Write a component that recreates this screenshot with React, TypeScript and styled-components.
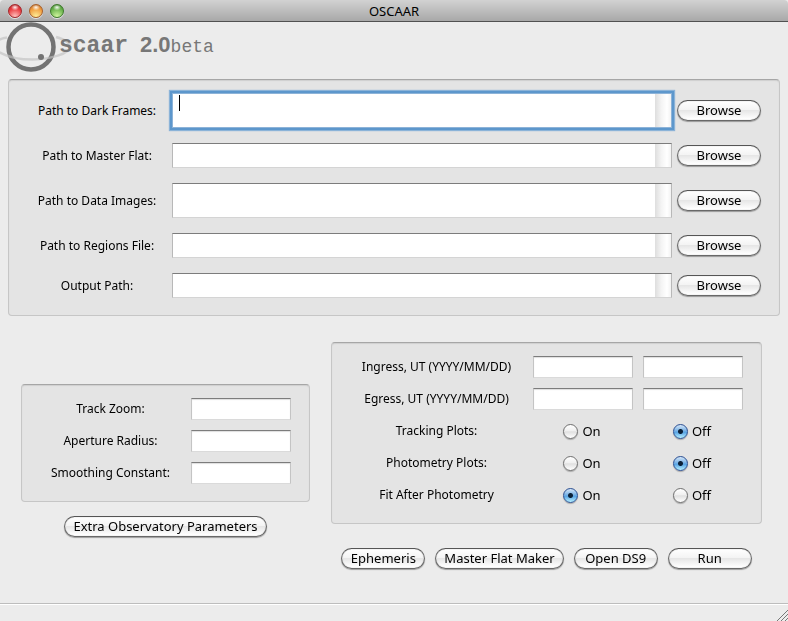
import React, { useState } from "react";
import styled, { createGlobalStyle } from "styled-components";

const GlobalStyle = createGlobalStyle`
  *, *::before, *::after { box-sizing: border-box; }
  body { margin: 0; background: #ececec; }
  body, button, input, textarea { font-family: "Noto Sans", "Open Sans", sans-serif; font-size: 12px; line-height: 16px; color: #000; }
`;

const Window = styled.div`
  display: flex;
  flex-direction: column;
  min-height: 100vh;
  overflow-x: hidden;
  background: #ececec;
`;

const TitleBar = styled.header`
  display: grid;
  grid-template-columns: 1fr auto 1fr;
  align-items: center;
  height: 22px;
  padding: 0 8px;
  border-bottom: 1px solid #515151;
  border-radius: 4px 4px 0 0;
  background: linear-gradient(#d2d2d2, #a8a8a8);
`;

const Title = styled.h1`
  margin: 0;
  font-size: 13px;
  font-weight: 400;
  line-height: 20px;
`;

const Lights = styled.div`
  display: flex;
  gap: 7px;
`;

const Light = styled.button<{ $dark: string; $mid: string; $glow: string }>`
  width: 14px;
  height: 14px;
  padding: 0;
  border: 1px solid ${(p) => p.$dark};
  border-radius: 50%;
  background:
    radial-gradient(ellipse 4px 3px at 50% 20%, #fffe, #fff0),
    radial-gradient(circle at 50% 95%, ${(p) => p.$glow}, ${(p) => p.$mid} 65%, ${(p) => p.$dark});
  box-shadow: 0 1px 0 #e2e2e2;
`;

const Brand = styled.div`
  display: flex;
  height: 57px;
`;

const Logo = styled.svg`
  flex: none;
  width: 59px;
  height: 52px;
  overflow: visible;
`;

const Wordmark = styled.p`
  display: flex;
  align-items: baseline;
  margin: 0;
  color: #777;
  font-family: "Liberation Mono", monospace;
  font-size: 23px;
  font-weight: 700;
  line-height: 46px;
`;

const Version = styled.span`
  margin-left: 12px;
  font-family: "Liberation Sans", sans-serif;
  font-size: 22px;
`;

const Stage = styled.span`
  font-size: 18px;
  font-weight: 400;
`;

const Panel = styled.section`
  border: 1px solid #c6c6c6;
  border-top-color: #a6a6a6;
  border-radius: 4px;
  background: #e4e4e4;
  box-shadow: inset 0 1px 1px #cfcfcf;
`;

const PathPanel = styled(Panel)`
  display: flex;
  flex-direction: column;
  gap: 15px;
  margin: 0 8px;
  padding: 13px 18px 17px 27px;
`;

const PathRow = styled.div`
  display: grid;
  grid-template-columns: 122px 1fr 84px;
  align-items: center;
`;

const Label = styled.label`
  text-align: center;
  white-space: nowrap;
`;

const PathFrame = styled.div<{ $tall?: boolean }>`
  display: flex;
  height: ${(p) => (p.$tall ? 35 : 25)}px;
  margin: 0 5px 0 14px;
  border: 1px solid #b8b8b8;
  border-top-color: #7c7c7c;
  border-bottom-color: #d4d4d4;
  background: #fff;

  &::after {
    content: "";
    width: 16px;
    background: linear-gradient(90deg, #dedede, #f4f4f4 40%, #fff 75%, #f2f2f2);
  }

  &:focus-within {
    border-color: #8db3d8;
    box-shadow: 0 0 0 2px #5d97cc, 0 0 1px 3px #8bb3d8;
  }
`;

const PathInput = styled.textarea`
  flex: 1;
  min-width: 0;
  height: 100%;
  padding: 1px 6px;
  border: 0;
  background: transparent;
  resize: none;
  outline: none;
  overflow: hidden;

  &:focus:placeholder-shown {
    caret-color: transparent;
    background: linear-gradient(#000, #000) 6px 1px / 1px 16px no-repeat;
  }
`;

const PushButton = styled.button`
  min-width: 84px;
  height: 21px;
  padding: 0 8px 1px;
  border: 1px solid #686868;
  border-top-color: #555;
  border-radius: 11px;
  background: linear-gradient(#fff, #f4f4f4 45%, #e6e6e6 50%, #fff 95%);
  box-shadow: 0 1px 1px #0005, inset 0 0 1px #999;
  font-size: 13px;
  line-height: 18px;
  white-space: nowrap;
`;

const Settings = styled.main`
  display: grid;
  grid-template-columns: 289fr 431fr;
  gap: 21px;
  margin: 26px 26px 24px 21px;
`;

const Column = styled.div<{ $drop?: boolean; $gap: number }>`
  display: flex;
  flex-direction: column;
  align-items: center;
  gap: ${(p) => p.$gap}px;
  padding-top: ${(p) => (p.$drop ? 42 : 0)}px;

  > section { width: 100%; }
`;

const TuningPanel = styled(Panel)`
  display: grid;
  grid-template-columns: 1fr 100px;
  align-items: center;
  gap: 10px 18px;
  padding: 13px 18px 17px 26px;
`;

const TimingPanel = styled(Panel)`
  display: grid;
  grid-template-columns: 1fr 100px 100px;
  align-items: center;
  gap: 10px;
  padding: 13px 18px 17px;
`;

const TextField = styled.input`
  display: block;
  width: 100%;
  min-width: 0;
  height: 22px;
  padding: 0 4px;
  border: 1px solid #c4c4c4;
  border-top-color: #7c7c7c;
  border-bottom-color: #dadada;
  border-radius: 0;
  background: #fff;
  box-shadow: inset 0 1px 1px #dedede;
  outline: none;
`;

const SwitchName = styled.span`
  text-align: center;
`;

const Choice = styled.label`
  display: flex;
  align-items: center;
  justify-content: center;
  gap: 4px;
  height: 22px;
  padding-right: 2px;
  font-size: 13px;
`;

const Radio = styled.input`
  appearance: none;
  width: 15px;
  height: 15px;
  margin: 0;
  border: 1px solid #6f6f6f;
  border-radius: 50%;
  background: linear-gradient(#fff, #f0f0f0 45%, #e0e0e0 52%, #fff);
  box-shadow: 0 1px 1px #0004;

  &:checked {
    border-color: #2b4f92;
    background:
      radial-gradient(circle at 50% 50%, #0b2138 2px, #0b213800 3px),
      linear-gradient(#d5e6f8, #78b2e6 45%, #57a3e4 55%, #b6f0ff);
  }
`;

const Actions = styled.div`
  display: flex;
  gap: 10px;
`;

const StatusBar = styled.footer`
  display: flex;
  justify-content: flex-end;
  align-items: flex-end;
  height: 18px;
  margin-top: auto;
  border-top: 1px solid #bdbdbd;
  box-shadow: inset 0 1px 0 #fff;
`;

const Grip = styled.svg`
  width: 12px;
  height: 12px;
`;

const paths = [
  { id: "dark", label: "Path to Dark Frames:", tall: true },
  { id: "flat", label: "Path to Master Flat:", tall: false },
  { id: "data", label: "Path to Data Images:", tall: true },
  { id: "regions", label: "Path to Regions File:", tall: false },
  { id: "output", label: "Output Path:", tall: false },
];

const tuning = [
  { id: "zoom", label: "Track Zoom:" },
  { id: "radius", label: "Aperture Radius:" },
  { id: "smoothing", label: "Smoothing Constant:" },
];

const times = [
  { id: "ingress", label: "Ingress, UT (YYYY/MM/DD)" },
  { id: "egress", label: "Egress, UT (YYYY/MM/DD)" },
];

const switches = [
  { id: "tracking", label: "Tracking Plots:", on: false },
  { id: "photometry", label: "Photometry Plots:", on: false },
  { id: "fit", label: "Fit After Photometry", on: true },
];

function OnOff({ id, label, on }: { id: string; label: string; on: boolean }) {
  const [value, setValue] = useState(on);
  return (
    <>
      <SwitchName>{label}</SwitchName>
      <Choice>
        <Radio type="radio" name={id} checked={value} onChange={() => setValue(true)} />
        On
      </Choice>
      <Choice>
        <Radio type="radio" name={id} checked={!value} onChange={() => setValue(false)} />
        Off
      </Choice>
    </>
  );
}

export default function App() {
  return (
    <Window>
      <GlobalStyle />
      <TitleBar>
        <Lights>
          <Light aria-label="Close" $dark="#a3272b" $mid="#e8373b" $glow="#ffc4c0" />
          <Light aria-label="Minimize" $dark="#a8602a" $mid="#f09a3c" $glow="#fff09a" />
          <Light aria-label="Zoom" $dark="#3d7a2b" $mid="#66b04a" $glow="#d2f7a0" />
        </Lights>
        <Title>OSCAAR</Title>
      </TitleBar>

      <Brand>
        <Logo viewBox="0 0 59 52" aria-hidden="true">
          <circle cx="31" cy="25" r="22.5" fill="none" stroke="#737373" strokeWidth="4.5" />
          <path
            d="M7 15.5C-5 17 -9 25 0 30.5C8 35 20 37.500 33 37.500C50 37 70 32 70 24.500C70 20 63 17 56 15"
            fill="none"
            stroke="#c2c2c2"
            strokeOpacity="0.65"
            strokeWidth="2.5"
          />
          <circle cx="41" cy="35" r="3" fill="#737373" />
        </Logo>
        <Wordmark>
          scaar<Version>2.0</Version>
          <Stage>beta</Stage>
        </Wordmark>
      </Brand>

      <PathPanel>
        {paths.map((p, i) => (
          <PathRow key={p.id}>
            <Label htmlFor={p.id}>{p.label}</Label>
            <PathFrame $tall={p.tall}>
              <PathInput id={p.id} rows={1} placeholder=" " autoFocus={i === 0} />
            </PathFrame>
            <PushButton>Browse</PushButton>
          </PathRow>
        ))}
      </PathPanel>

      <Settings>
        <Column $drop $gap={14}>
          <TuningPanel>
            {tuning.map((t) => (
              <React.Fragment key={t.id}>
                <Label htmlFor={t.id}>{t.label}</Label>
                <TextField id={t.id} />
              </React.Fragment>
            ))}
          </TuningPanel>
          <PushButton>Extra Observatory Parameters</PushButton>
        </Column>

        <Column $gap={24}>
          <TimingPanel>
            {times.map((t) => (
              <React.Fragment key={t.id}>
                <Label htmlFor={t.id}>{t.label}</Label>
                <TextField id={t.id} />
                <TextField aria-label={t.label + " time"} />
              </React.Fragment>
            ))}
            {switches.map((s) => (
              <OnOff key={s.id} {...s} />
            ))}
          </TimingPanel>
          <Actions>
            <PushButton>Ephemeris</PushButton>
            <PushButton>Master Flat Maker</PushButton>
            <PushButton>Open DS9</PushButton>
            <PushButton>Run</PushButton>
          </Actions>
        </Column>
      </Settings>

      <StatusBar>
        <Grip viewBox="0 0 12 12" aria-hidden="true">
          <path d="M1 12L12 1M5 12L12 5M9 12L12 9" stroke="#777" fill="none" />
        </Grip>
      </StatusBar>
    </Window>
  );
}
